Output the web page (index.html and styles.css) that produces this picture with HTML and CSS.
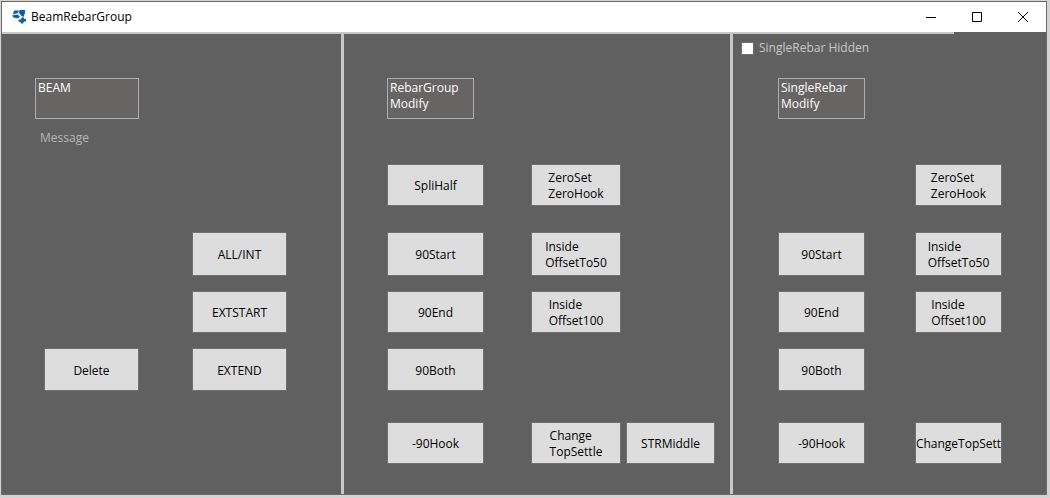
FILE: index.html
```html
<!DOCTYPE html>
<html lang="en">
<head>
<meta charset="utf-8">
<title>BeamRebarGroup</title>
<link rel="stylesheet" href="styles.css">
</head>
<body>
<main class="window">
  <header class="titlebar">
    <svg class="logo" viewBox="0 0 14 14" aria-hidden="true">
      <path d="M2 0.500H7L6 3L1 4.500Z M7.500 0H13V3L11.500 7L9.500 6L7 3Z M0 5.500L5.500 4.500L8 6.500L6 8.500L1.500 7.500Z M9.500 7.500H12V9H14V11.500H12L11 13.500H9L8.500 12L6.500 11.500V9.500H9Z"/>
    </svg>
    <h1 class="title">BeamRebarGroup</h1>
    <div class="controls">
      <button class="control" aria-label="Minimize"><svg viewBox="0 0 10 10"><path d="M0 5.500H10"/></svg></button>
      <button class="control" aria-label="Maximize"><svg viewBox="0 0 10 10"><path d="M0.500 0.500H9.500V9.500H0.500Z"/></svg></button>
      <button class="control" aria-label="Close"><svg viewBox="0 0 10 10"><path d="M0 0L10 10M10 0L0 10"/></svg></button>
    </div>
  </header>
  <div class="rule"></div>
  <div class="panels">
    <section class="panel">
      <div class="options"></div>
      <div class="grid grid-beam">
        <div class="heading row-1">
          <h2 class="box">BEAM</h2>
          <p class="message">Message</p>
        </div>
        <button class="btn row-3 col-2">ALL/INT</button>
        <button class="btn row-4 col-2">EXTSTART</button>
        <button class="btn row-5 col-1 end">Delete</button>
        <button class="btn row-5 col-2">EXTEND</button>
      </div>
    </section>
    <section class="panel">
      <div class="options"></div>
      <div class="grid grid-group">
        <div class="heading row-1"><h2 class="box">RebarGroup<br>Modify</h2></div>
        <button class="btn row-2 col-1">SpliHalf</button>
        <button class="btn row-2 col-2"><span>ZeroSet<br>ZeroHook</span></button>
        <button class="btn row-3 col-1">90Start</button>
        <button class="btn row-3 col-2"><span>Inside<br>OffsetTo50</span></button>
        <button class="btn row-4 col-1">90End</button>
        <button class="btn row-4 col-2"><span>Inside<br>Offset100</span></button>
        <button class="btn row-5 col-1">90Both</button>
        <button class="btn row-6 col-1">-90Hook</button>
        <button class="btn row-6 col-2"><span>Change<br>TopSettle</span></button>
        <button class="btn row-6 col-3">STRMiddle</button>
      </div>
    </section>
    <section class="panel">
      <div class="options">
        <label class="check"><input type="checkbox">SingleRebar Hidden</label>
      </div>
      <div class="grid grid-single">
        <div class="heading row-1"><h2 class="box">SingleRebar<br>Modify</h2></div>
        <button class="btn row-2 col-2"><span>ZeroSet<br>ZeroHook</span></button>
        <button class="btn row-3 col-1">90Start</button>
        <button class="btn row-3 col-2"><span>Inside<br>OffsetTo50</span></button>
        <button class="btn row-4 col-1">90End</button>
        <button class="btn row-4 col-2"><span>Inside<br>Offset100</span></button>
        <button class="btn row-5 col-1">90Both</button>
        <button class="btn row-6 col-1">-90Hook</button>
        <button class="btn row-6 col-2">ChangeTopSett</button>
      </div>
    </section>
  </div>
</main>
</body>
</html>
```
FILE: styles.css
```css
* { box-sizing: border-box; }
body {
  margin: 0;
  padding: 1px 3px 3px 1px;
  min-height: 100vh;
  display: flex;
  background: #d2d2d2;
  font: 12px/16px "Open Sans", "Noto Sans", sans-serif;
  color: #000;
}
h1, h2, p { margin: 0; font-size: 12px; font-weight: 400; }
button { font: inherit; color: inherit; }
.window {
  flex: 1;
  display: flex;
  flex-direction: column;
  border: 1px solid #6b6b6b;
  background: #606060;
}
.titlebar {
  display: flex;
  align-items: center;
  height: 30px;
  padding-left: 10px;
  background: #fff;
}
.logo { width: 14px; height: 14px; margin-right: 5px; fill: #0a60a0; }
.title { flex: 1; }
.controls { display: flex; align-self: stretch; }
.control {
  width: 46px;
  padding: 0;
  border: 0;
  background: none;
  display: flex;
  align-items: center;
  justify-content: center;
}
.control svg { width: 10px; height: 10px; fill: none; stroke: #000; }
.rule { height: 2px; margin-right: 92px; background: #c8c8c8; }
.panels { flex: 1; display: grid; grid-template-columns: 342fr 389fr 313fr; }
.panel { border-right: 3px solid #c8c8c8; }
.panel:last-child { border-right: 0; }
.options { height: 44px; padding: 6px 8px; }
.check { display: flex; align-items: center; gap: 5px; color: #c8c8c8; }
.check input {
  appearance: none;
  width: 13px;
  height: 13px;
  margin: 0;
  border: 1px solid #707070;
  background: #fff;
}
.check input:checked { background: #0a60a0; }
.grid { display: grid; grid-template-rows: 86px 68px 59px 57px 74px 42px; align-items: start; }
.grid-beam { grid-template-columns: 104px 95px; column-gap: 53px; padding-left: 33px; }
.grid-group { grid-template-columns: 139px 90px 89px; column-gap: 5px; padding-left: 43px; }
.grid-single { grid-template-columns: 87px 87px; column-gap: 50px; padding-left: 45px; }
.box {
  width: 87px;
  height: 41px;
  padding: 1px 2px;
  border: 1px solid #abadb3;
  background: #676563;
  color: #fff;
}
.grid-beam .box { width: 104px; }
.message { padding: 11px 5px 0; color: #b8b8b8; }
.btn {
  height: 42px;
  width: 100%;
  padding: 2px 0 0;
  border: 1px solid #707070;
  background: #ddd;
  display: flex;
  align-items: center;
  justify-content: center;
  text-align: left;
  white-space: nowrap;
  overflow: hidden;
}
.grid-beam .btn { width: 95px; }
.grid-group .col-1 { width: 97px; }
.end { justify-self: end; }
.row-1 { grid-row: 1; }
.row-2 { grid-row: 2; }
.row-3 { grid-row: 3; height: 44px; }
.row-4 { grid-row: 4; }
.row-5 { grid-row: 5; height: 43px; }
.row-6 { grid-row: 6; }
.col-1 { grid-column: 1; }
.col-2 { grid-column: 2; }
.col-3 { grid-column: 3; }
```
